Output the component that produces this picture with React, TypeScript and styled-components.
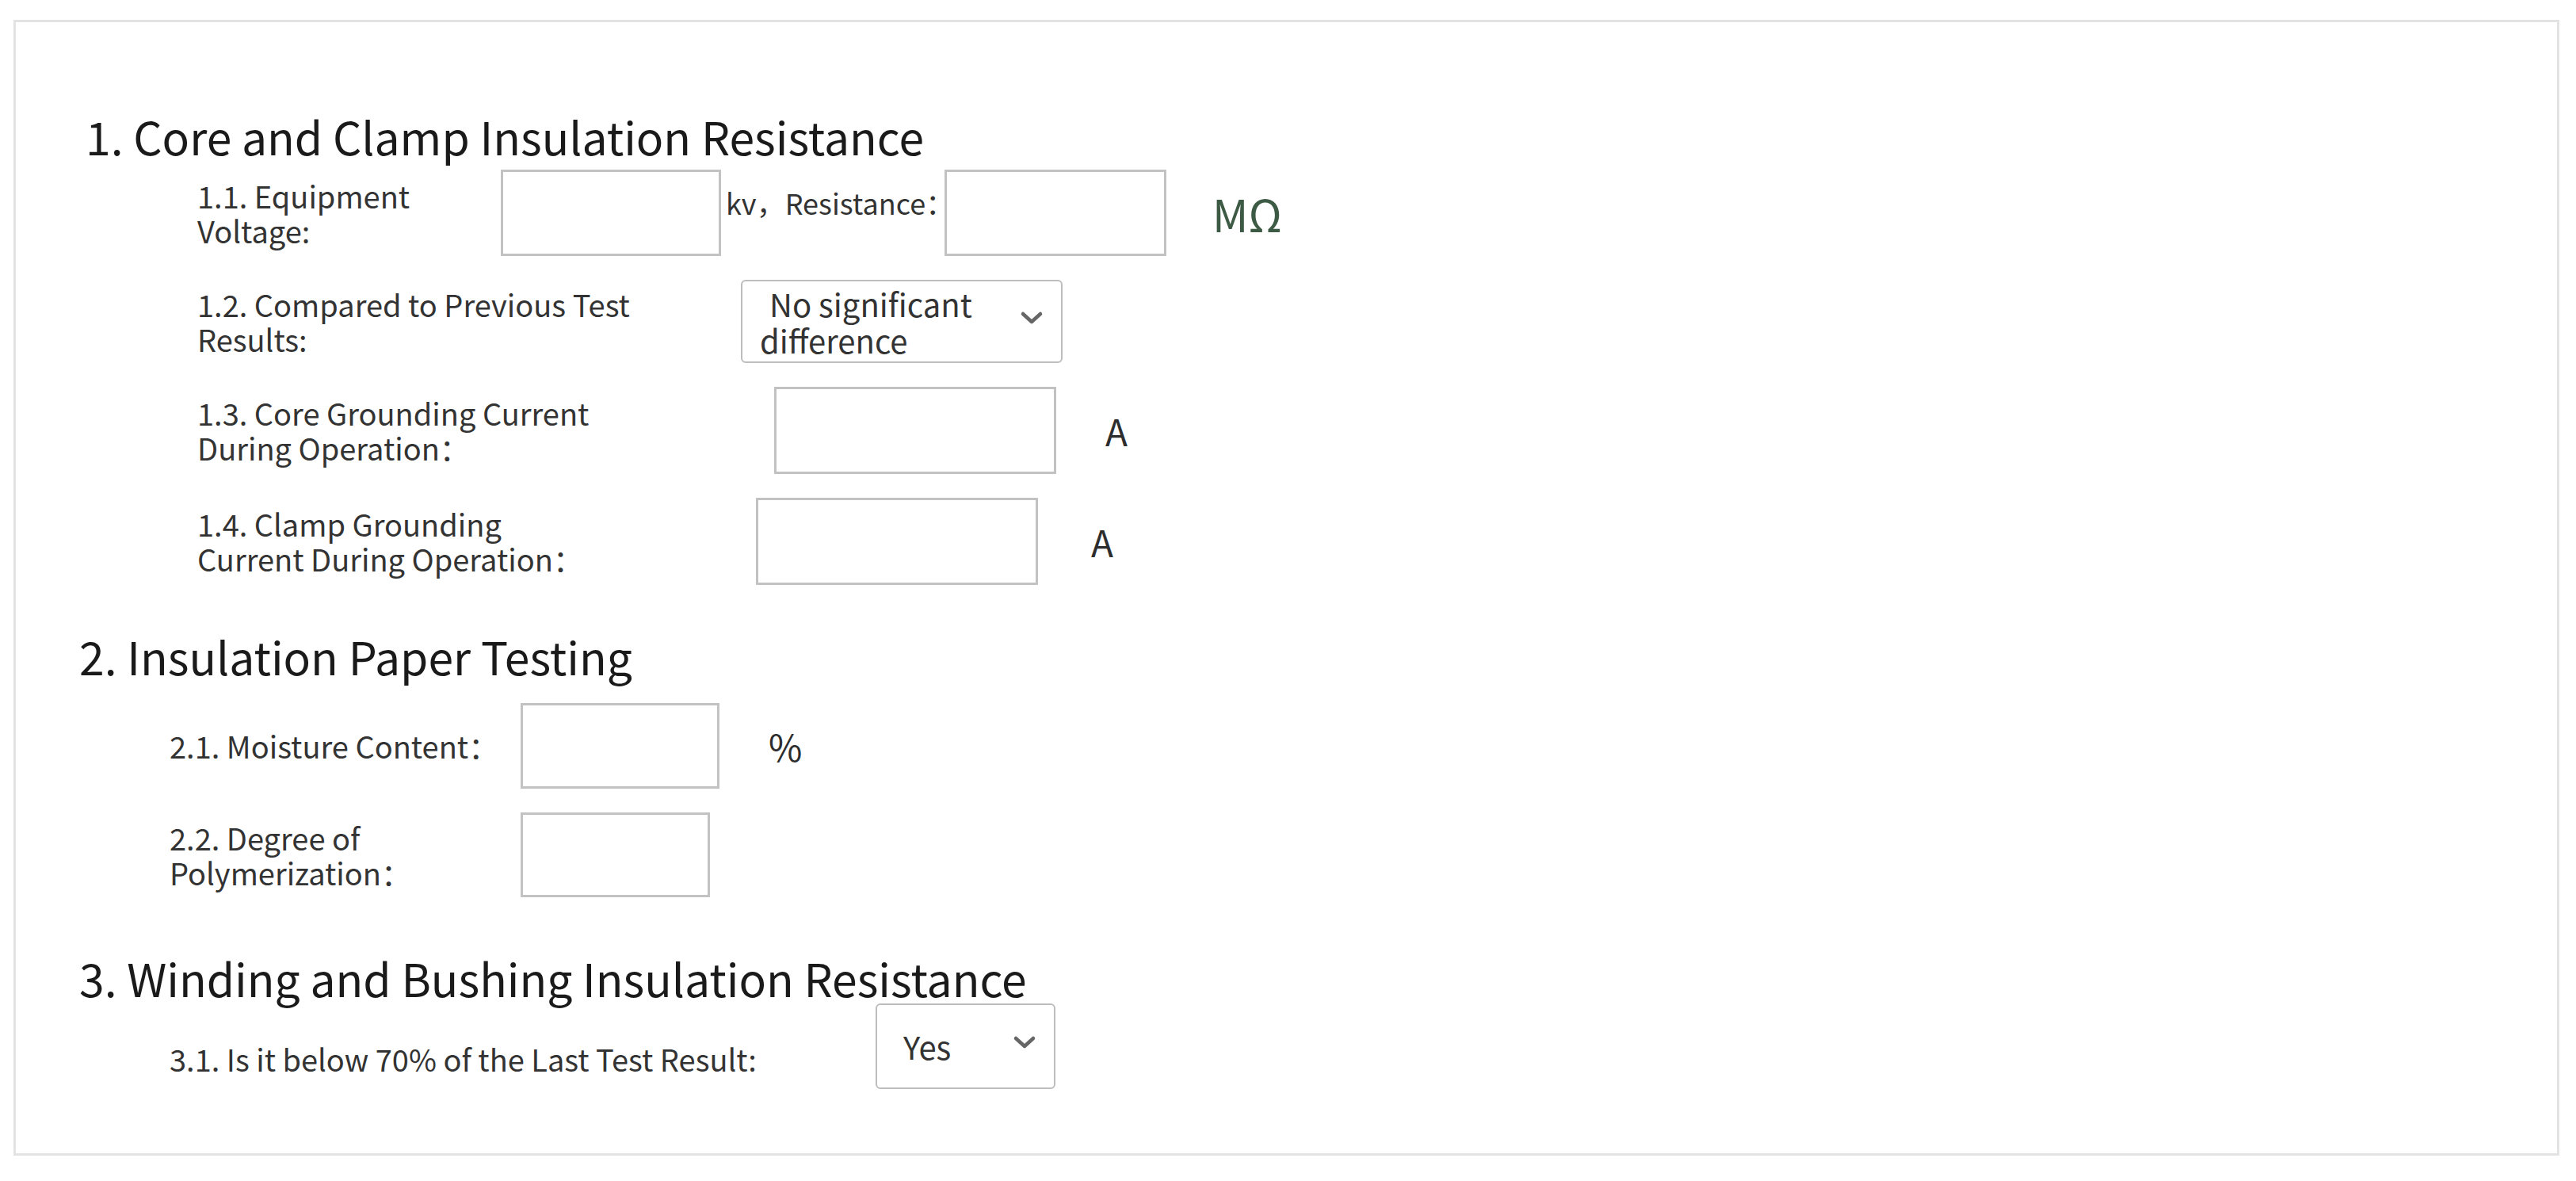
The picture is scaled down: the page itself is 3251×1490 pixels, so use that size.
import React from "react";
import styled, { createGlobalStyle } from "styled-components";

const GlobalStyle = createGlobalStyle`
  html, body {
    margin: 0;
    padding: 0;
    background: #ffffff;
  }
  body {
    font-family: "Noto Sans CJK SC", "Noto Sans", sans-serif;
    color: #333;
  }
`;

const Page = styled.div`
  padding: 25px 0 0 17px;
`;

const Card = styled.div`
  box-sizing: border-box;
  width: 3213px;
  height: 1433px;
  border: 3px solid #e3e3e3;
  padding: 112px 0 0 80px;
  display: flex;
  flex-direction: column;
`;

const Section = styled.section<{ $top: number }>`
  display: flex;
  flex-direction: column;
  margin-top: ${p => p.$top}px;
`;

const Heading = styled.h2<{ $indent: number; $below: number }>`
  margin: 0 0 ${p => p.$below}px ${p => p.$indent}px;
  font-size: 57px;
  line-height: 62px;
  font-weight: 400;
  color: #1a1a1a;
  white-space: nowrap;
`;

const Rows = styled.div<{ $indent: number }>`
  display: flex;
  flex-direction: column;
  gap: 30px;
  padding-left: ${p => p.$indent}px;
`;

const Row = styled.div`
  display: flex;
  align-items: center;
`;

const Label = styled.div<{ $width: number; $drop?: number }>`
  flex-shrink: 0;
  width: ${p => p.$width}px;
  font-size: 38px;
  line-height: 44px;
  color: #333;
  white-space: nowrap;
  padding-top: ${p => p.$drop ?? 0}px;
`;

const TextBox = styled.div<{ $w: number; $h: number }>`
  box-sizing: border-box;
  flex-shrink: 0;
  width: ${p => p.$w}px;
  height: ${p => p.$h}px;
  border: 3px solid #c2c2c2;
  background: #fff;
`;

const Inline = styled.span`
  flex-shrink: 0;
  box-sizing: border-box;
  width: 282px;
  padding-left: 6px;
  margin-bottom: 28px;
  font-size: 36px;
  line-height: 40px;
  color: #333;
  white-space: nowrap;
  overflow: visible;
`;

const Unit = styled.span<{ $gap: number }>`
  margin-left: ${p => p.$gap}px;
  font-size: 46px;
  line-height: 50px;
  color: #2d2d2d;
  white-space: nowrap;
`;

const GreenUnit = styled(Unit)`
  font-size: 56px;
  line-height: 60px;
  color: #3c5a44;
`;

const SelectBox = styled.div<{ $w: number; $h: number; $pad: number }>`
  box-sizing: border-box;
  flex-shrink: 0;
  width: ${p => p.$w}px;
  height: ${p => p.$h}px;
  border: 2px solid #bdbdbd;
  border-radius: 6px;
  background: #fff;
  display: flex;
  align-items: center;
  justify-content: space-between;
  padding: 0 22px 0 ${p => p.$pad}px;
`;

const SelectText = styled.div`
  font-size: 40px;
  line-height: 46px;
  color: #333;
  white-space: nowrap;
`;

const Indent = styled.span`
  padding-left: 12px;
`;

const Chevron = () => (
  <svg width="30" height="18" viewBox="0 0 30 18" style={{ marginBottom: 10 }}>
    <path d="M4 4 L15 14 L26 4" fill="none" stroke="#666" strokeWidth="4.5" strokeLinecap="round" strokeLinejoin="round" />
  </svg>
);

const Lines: React.FC<{ lines: string[] }> = ({ lines }) => (
  <>
    {lines.map((l, i) => (
      <React.Fragment key={i}>
        {i > 0 && <br />}
        {l}
      </React.Fragment>
    ))}
  </>
);

export default function App() {
  return (
    <>
      <GlobalStyle />
      <Page>
        <Card>
          <Section $top={0}>
            <Heading $indent={8} $below={12}>1. Core and Clamp Insulation Resistance</Heading>
            <Rows $indent={149}>
              <Row>
                <Label $width={383}><Lines lines={["1.1. Equipment", "Voltage:"]} /></Label>
                <TextBox $w={278} $h={109} />
                <Inline>kv，Resistance：</Inline>
                <TextBox $w={280} $h={109} />
                <GreenUnit $gap={58}>MΩ</GreenUnit>
              </Row>
              <Row>
                <Label $width={686}><Lines lines={["1.2. Compared to Previous Test", "Results:"]} /></Label>
                <SelectBox $w={406} $h={105} $pad={22}>
                  <SelectText>
                    <Indent>No significant</Indent>
                    <br />
                    difference
                  </SelectText>
                  <Chevron />
                </SelectBox>
              </Row>
              <Row>
                <Label $width={728}><Lines lines={["1.3. Core Grounding Current", "During Operation："]} /></Label>
                <TextBox $w={356} $h={110} />
                <Unit $gap={62}>A</Unit>
              </Row>
              <Row>
                <Label $width={705}><Lines lines={["1.4. Clamp Grounding", "Current During Operation："]} /></Label>
                <TextBox $w={356} $h={110} />
                <Unit $gap={67}>A</Unit>
              </Row>
            </Rows>
          </Section>

          <Section $top={58}>
            <Heading $indent={0} $below={29}>2. Insulation Paper Testing</Heading>
            <Rows $indent={114}>
              <Row>
                <Label $width={443}>2.1. Moisture Content：</Label>
                <TextBox $w={251} $h={108} />
                <Unit $gap={62}>%</Unit>
              </Row>
              <Row>
                <Label $width={443}><Lines lines={["2.2. Degree of", "Polymerization："]} /></Label>
                <TextBox $w={239} $h={107} />
              </Row>
            </Rows>
          </Section>

          <Section $top={70}>
            <Heading $indent={0} $below={2}>3. Winding and Bushing Insulation Resistance</Heading>
            <Rows $indent={114}>
              <Row>
                <Label $width={891} $drop={32}>3.1. Is it below 70% of the Last Test Result:</Label>
                <SelectBox $w={227} $h={108} $pad={33}>
                  <SelectText>Yes</SelectText>
                  <Chevron />
                </SelectBox>
              </Row>
            </Rows>
          </Section>
        </Card>
      </Page>
    </>
  );
}
